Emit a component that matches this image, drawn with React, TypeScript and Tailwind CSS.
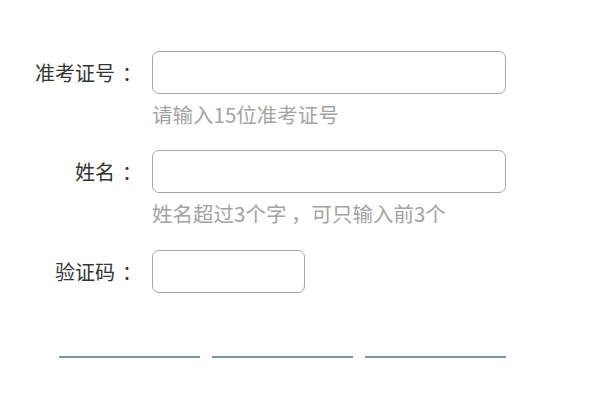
function FieldLabel({ text }: { text: string }) {
  return (
    <label className="w-[152px] h-[43px] flex items-center justify-end pr-[10px] shrink-0">
      <span>{text}</span>
      <span className="ml-[7px]">：</span>
    </label>
  );
}

export default function App() {
  return (
    <div className="w-[600px] h-[400px] bg-white overflow-hidden font-['Noto_Sans_CJK_SC',sans-serif] text-[20px] text-[#333]">
      <div className="pt-[51px]">
        {/* 准考证号 */}
        <div className="flex">
          <FieldLabel text="准考证号" />
          <div>
            <input className="block w-[354px] h-[43px] border border-[#a6a6a6] rounded-[7px] outline-none px-2" />
            <div className="mt-[6px] leading-[28px] text-[20.5px] text-[#a3a3a3]">请输入15位准考证号</div>
          </div>
        </div>

        {/* 姓名 */}
        <div className="flex mt-[22px]">
          <FieldLabel text="姓名" />
          <div>
            <input className="block w-[354px] h-[43px] border border-[#a6a6a6] rounded-[7px] outline-none px-2" />
            <div className="mt-[6px] leading-[28px] text-[20.5px] text-[#a3a3a3]">姓名超过3个字 ，可只输入前3个</div>
          </div>
        </div>

        {/* 验证码 */}
        <div className="flex mt-[23px]">
          <FieldLabel text="验证码" />
          <div>
            <input className="block w-[153px] h-[43px] border border-[#a6a6a6] rounded-[7px] outline-none px-2" />
          </div>
        </div>

        {/* buttons (bottom edges) */}
        <div className="flex gap-[12px] ml-[59px] mt-[63px]">
          <div className="w-[141px] h-[2px] bg-[#7a96a6]" />
          <div className="w-[141px] h-[2px] bg-[#7a96a6]" />
          <div className="w-[141px] h-[2px] bg-[#7a96a6]" />
        </div>
      </div>
    </div>
  );
}
